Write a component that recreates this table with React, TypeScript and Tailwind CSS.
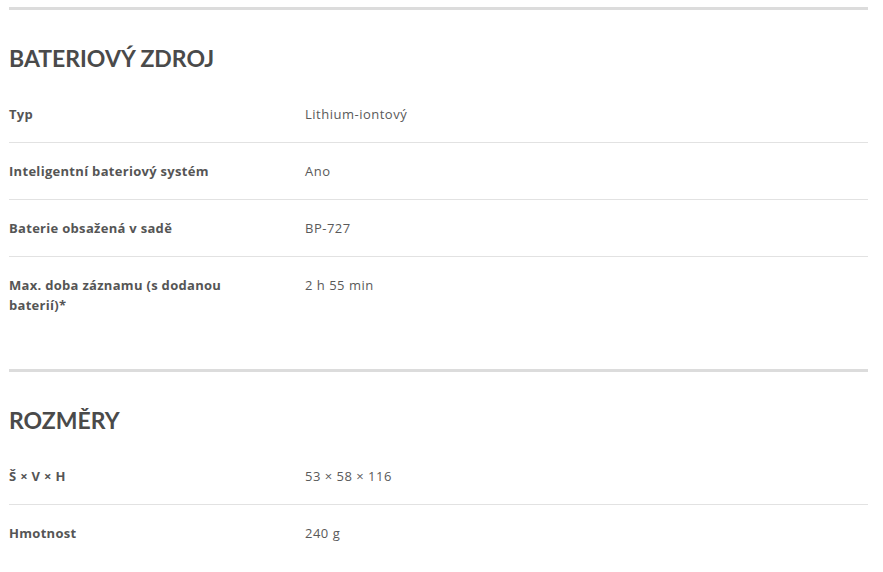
const sections = [
  {
    title: "BATERIOVÝ ZDROJ",
    rows: [
      ["Typ", "Lithium-iontový"],
      ["Inteligentní bateriový systém", "Ano"],
      ["Baterie obsažená v sadě", "BP-727"],
      ["Max. doba záznamu (s dodanou baterií)*", "2 h 55 min"],
    ],
  },
  {
    title: "ROZMĚRY",
    rows: [
      ["Š × V × H", "53 × 58 × 116"],
      ["Hmotnost", "240 g"],
    ],
  },
];

const App = () => {
  return (
    <div className="min-h-screen bg-white font-['Open_Sans','Liberation_Sans',sans-serif]">
      <div className="ml-[9px] w-[859px] pt-[7px]">
        {sections.map((section) => (
          <section
            key={section.title}
            className="mb-[36px] border-t-[3px] border-[#dcdcdc]"
          >
            <h2 className="mt-[33px] mb-[13px] font-['Lato','Liberation_Sans',sans-serif] text-[23px] leading-[30px] font-bold text-[#4a4a4a]">
              {section.title}
            </h2>
            <div>
              {section.rows.map(([label, value], i) => (
                <div
                  key={label}
                  className={`flex py-[18px] text-[13px] leading-[20px] ${
                    i < section.rows.length - 1 ? "border-b border-[#e2e2e2]" : ""
                  }`}
                >
                  <div className="w-[296px] shrink-0 pr-[50px] font-bold tracking-[0.3px] text-[#555555]">
                    {label}
                  </div>
                  <div className="tracking-[0.5px] text-[#5a5a5a]">{value}</div>
                </div>
              ))}
            </div>
          </section>
        ))}
      </div>
    </div>
  );
};

export default App;
